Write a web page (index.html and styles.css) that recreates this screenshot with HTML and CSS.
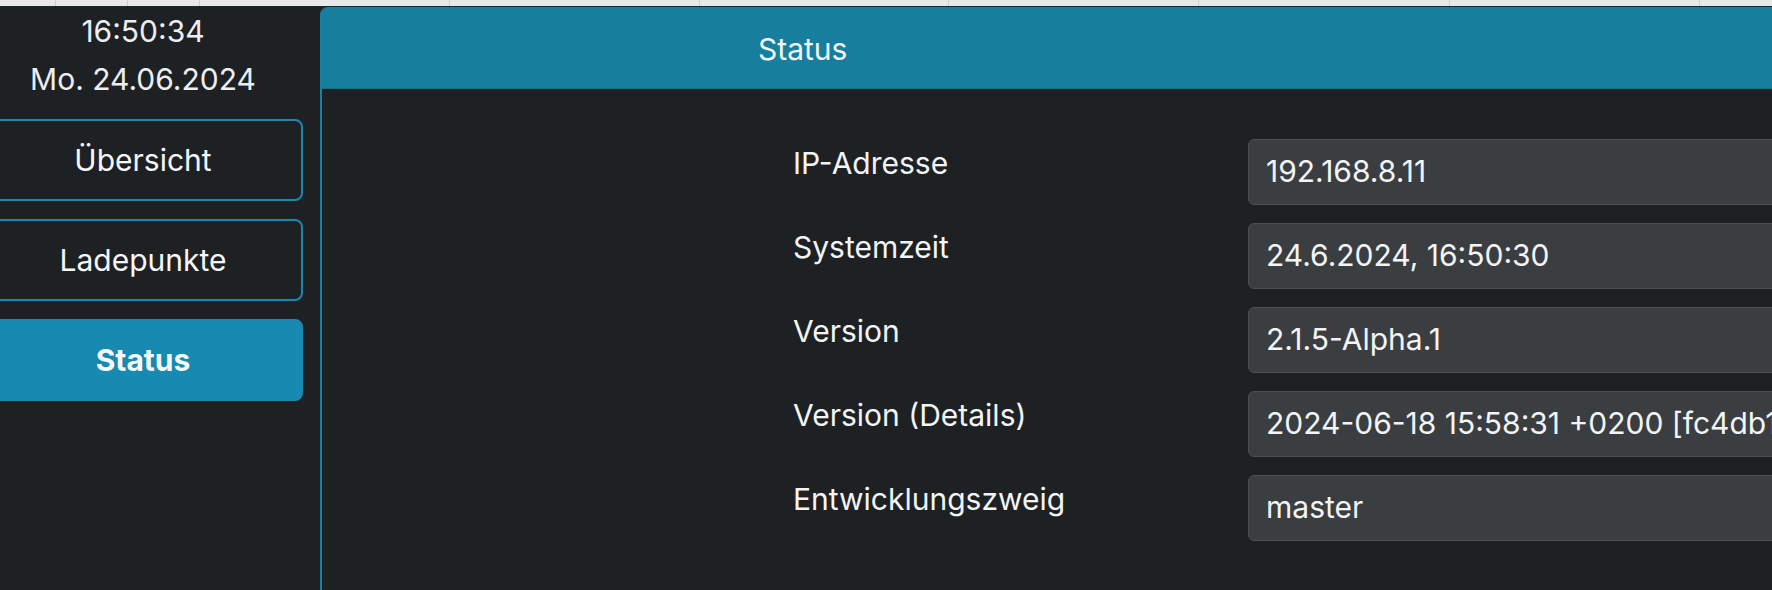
FILE: index.html
```html
<!DOCTYPE html>
<html lang="de">
<head>
<meta charset="utf-8">
<title>Status</title>
<link rel="stylesheet" href="styles.css">
</head>
<body>
<div class="tabs">
  <div class="tab w55"></div>
  <div class="tab w72"></div>
  <div class="tab w72"></div>
  <div class="tab w250"></div>
  <div class="tab w250"></div>
  <div class="tab w249"></div>
  <div class="tab w250"></div>
  <div class="tab w251"></div>
  <div class="tab w250"></div>
  <div class="tab rest"></div>
</div>
<div class="app">
  <aside class="sidebar">
    <div class="clock">
      <div>16:50:34</div>
      <div>Mo. 24.06.2024</div>
    </div>
    <nav class="nav">
      <a class="nav-btn">Übersicht</a>
      <a class="nav-btn">Ladepunkte</a>
      <a class="nav-btn active">Status</a>
    </nav>
  </aside>
  <main class="card">
    <div class="card-header">Status</div>
    <div class="card-body">
      <div class="grid">
        <div class="label">IP-Adresse</div>
        <div class="field">192.168.8.11</div>
        <div class="label">Systemzeit</div>
        <div class="field">24.6.2024, 16:50:30</div>
        <div class="label">Version</div>
        <div class="field">2.1.5-Alpha.1</div>
        <div class="label">Version (Details)</div>
        <div class="field">2024-06-18 15:58:31 +0200 [fc4db1a]</div>
        <div class="label">Entwicklungszweig</div>
        <div class="field">master</div>
      </div>
    </div>
  </main>
</div>
</body>
</html>
```

FILE: styles.css
```css
html, body {
  margin: 0;
  height: 100%;
  overflow: hidden;
}
body {
  background: #1e2124;
  color: #f3f4f5;
  font-family: Inter, "Noto Sans", sans-serif;
}
.tabs {
  display: flex;
  height: 7px;
  box-sizing: border-box;
  background: #e9e9e9;
  border-bottom: 1px solid #0e2a35;
}
.tab {
  box-sizing: border-box;
  border-right: 1px solid #cfcfcf;
  flex-shrink: 0;
}
.w55 { width: 56px; }
.w72 { width: 72px; }
.w250 { width: 250px; }
.w249 { width: 249px; }
.w251 { width: 251px; }
.rest { flex: 1; border-right: none; }

.app {
  display: flex;
  height: calc(100% - 7px);
}
.sidebar {
  width: 320px;
  margin-left: -17px;
  flex-shrink: 0;
}
.clock {
  text-align: center;
  font-size: 30px;
  line-height: 48px;
  color: #eceef0;
}
.nav {
  display: flex;
  flex-direction: column;
  gap: 18px;
  margin-top: 16px;
}
.nav-btn {
  height: 82px;
  box-sizing: border-box;
  border: 2px solid #1b87ad;
  border-radius: 8px;
  display: flex;
  align-items: center;
  justify-content: center;
  font-size: 30px;
  color: #f6f7f8;
}
.nav-btn.active {
  background: #1889b0;
  border-color: #1889b0;
  font-weight: 700;
}

.card {
  flex: 1;
  margin-left: 17px;
  margin-right: -40px;
  border-left: 2px solid #1a7fa0;
  border-top-left-radius: 8px;
  display: flex;
  flex-direction: column;
}
.card-header {
  height: 82px;
  box-sizing: border-box;
  background: #187e9e;
  border-top-left-radius: 6px;
  border-bottom: 1px solid #146f8b;
  display: flex;
  align-items: center;
  padding-left: 436px;
  padding-top: 3px;
  font-size: 30px;
  color: #f2f5f7;
}
.card-body {
  padding: 50px 0 0 471px;
}
.grid {
  display: grid;
  grid-template-columns: 455px 1fr;
  row-gap: 18px;
}
.label {
  font-size: 30px;
  line-height: 42px;
  padding-top: 3px;
  white-space: nowrap;
}
.field {
  height: 66px;
  box-sizing: border-box;
  border: 1px solid #4b4f53;
  border-radius: 6px;
  background: #3b3e41;
  padding: 10px 17px;
  font-size: 30px;
  line-height: 42px;
  white-space: nowrap;
  overflow: hidden;
}
```
